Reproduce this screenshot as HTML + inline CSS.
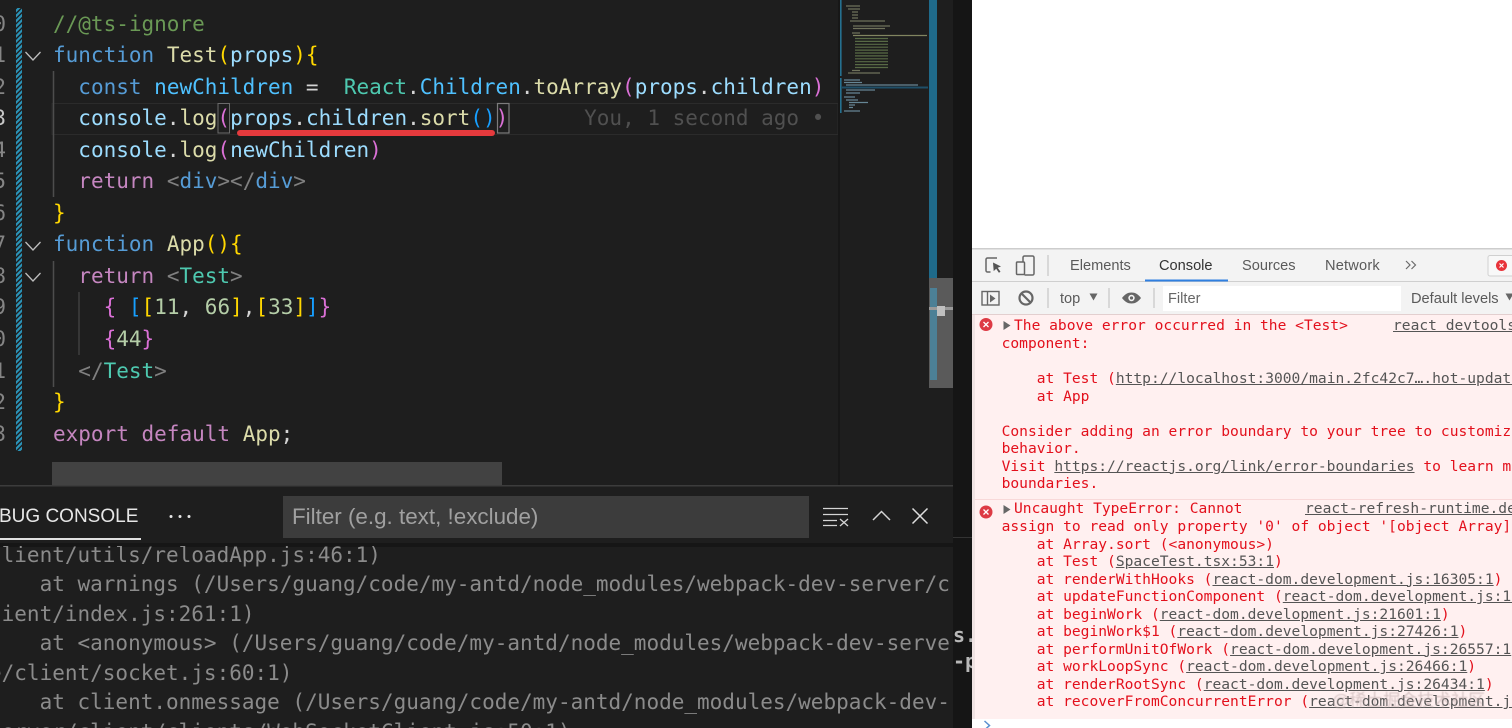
<!DOCTYPE html>
<html><head><meta charset="utf-8"><style>
html,body{margin:0;padding:0;background:#1e1e1e}
#root{position:relative;width:1512px;height:728px;overflow:hidden;background:#1e1e1e}
.a{position:absolute}
pre{margin:0;font-family:"DejaVu Sans Mono",monospace}
#code{left:53px;top:8.5px;font-size:21px;line-height:31.55px;color:#d4d4d4;filter:blur(.35px)}
.ln{left:-6.6px;top:8.5px;font-size:21px;line-height:31.55px;color:#858585;filter:blur(.35px)}
.k{color:#569cd6}.f{color:#dcdcaa}.p{color:#9cdcfe}.v{color:#4fc1ff}.t{color:#4ec9b0}.c{color:#c586c0}.g{color:#808080}.n{color:#b5cea8}.y{color:#ffd700}.o{color:#da70d6}.b{color:#179fff}.m{color:#6a9955}
#dbg{left:-11px;font-size:21px;line-height:29.5px;color:#8b8b8b;filter:blur(.35px)}
.ui{font-family:"Liberation Sans",sans-serif;white-space:nowrap}
#dev{left:972px;top:0;width:540px;height:728px;background:#fff;overflow:hidden}
.e{font-size:14.6px;line-height:17.55px;color:#e3101c;white-space:pre;filter:blur(.2px)}
.e u{color:#555;text-decoration-color:#555}
.tab{top:258px;font-size:14.6px;line-height:17px;color:#5a5a5a}
</style></head><body><div id="root">

<svg class="a" style="left:0;top:0" width="972" height="728" viewBox="0 0 972 728" fill="none">
<defs><pattern id="st" width="3.600" height="6" patternUnits="userSpaceOnUse" patternTransform="rotate(45)"><rect width="3.600" height="6" fill="#1e1e1e"/><rect width="2.200" height="6" fill="#2a93b8"/></pattern></defs>
<rect x="16" y="8" width="6" height="443" fill="url(#st)"/>
<rect x="52" y="103.500" width="786" height="31" stroke="#2b2b2b" stroke-width="1"/>
<path d="M25.500 52l7.500 8 7.500-8M25.500 242l7.500 8 7.500-8M25.500 273l7.500 8 7.500-8" stroke="#bdbdbd" stroke-width="1.300"/>
<path d="M53.500 71v126M53.500 261v126" stroke="#4d4d4d" stroke-width="1.500"/>
<path d="M79 292v63" stroke="#3f3f3f" stroke-width="1.500"/>
<rect x="218" y="103.500" width="11.500" height="29.500" stroke="#6a6a6a" stroke-width="1"/>
<rect x="497.500" y="103.500" width="11.500" height="29.500" stroke="#7c7c7c" stroke-width="1.200"/>
<rect x="838" y="0" width="115" height="485" fill="#1e1e1e"/>
<rect x="838" y="0" width="2" height="485" fill="#171717"/>
<rect x="840" y="0" width="1.600" height="76" fill="#25708f"/><rect x="840" y="78" width="1.600" height="35" fill="#25708f"/>
<g stroke-width="1.200" stroke="#6c8453" opacity=".75">
<path d="M846 6h14M848 9h12M852 12h6M852 15h6M852 18h6M850 21h35M853 26h37M853 28.500h32M852 33h8" stroke="#8a8f70"/>
<path d="M853 35.500h74" stroke="#a3a877"/>
<path d="M855 38.500h33M855 41.400h33M855 44.300h33M855 47.200h33M855 50.100h33M855 53h33M855 55.900h33M855 58.800h33M855 61.700h33M855 64.600h33M855 67.500h33"/>
<path d="M852 70.500h8M848 73h32" stroke="#8a8f70"/>
<path d="M844 80h16M844 82.500h18M846 85h72M846 90h29M846 93h14M844 97h11M846 100h12M849 102.500h19M849 105h6M849 107.500h4M844 111h16" stroke="#7fa9bd"/>
</g>
<rect x="842" y="86.500" width="86" height="2" fill="#1f4f68"/>
<rect x="929" y="0" width="8" height="278" fill="#1f6a8a"/>
<rect x="953" y="0" width="19" height="728" fill="#151515"/>
<rect x="929" y="278" width="24" height="110" fill="#5a5a5a"/>
<rect x="930" y="288" width="7" height="92" fill="#4c8096"/>
<rect x="929" y="307" width="24" height="3" fill="#9a9a9a"/>
<rect x="937" y="306" width="8" height="10" fill="#c0c0c0"/>
<rect x="52" y="462" width="450" height="23" fill="#424242"/>
<rect x="0" y="485" width="953" height="243" fill="#1e1e1e"/>
<rect x="0" y="485" width="953" height="1.500" fill="#3c3c3c"/>
<rect x="283" y="496" width="526" height="42" fill="#3c3c3c"/>
<rect x="0" y="538" width="141" height="2" fill="#e0e0e0"/>
<rect x="0" y="543" width="953" height="4" fill="#161616"/>
<rect x="953" y="537" width="19" height="1" fill="#333"/>
<circle cx="171" cy="516.500" r="1.500" fill="#e6e6e6"/><circle cx="180" cy="516.500" r="1.500" fill="#e6e6e6"/><circle cx="189" cy="516.500" r="1.500" fill="#e6e6e6"/>
<path d="M823 508.500h25M823 514.500h25M823 520.500h14M823 525.500h14M840 519l8 7M848 519l-8 7" stroke="#d4d4d4" stroke-width="1.300"/>
<path d="M873 520l8.500-8.500 8.500 8.500" stroke="#d4d4d4" stroke-width="1.500"/>
<path d="M912.500 508.500l15 15M927.500 508.500l-15 15" stroke="#dedede" stroke-width="1.500"/>
</svg>

<pre class="a ln">0
1
2
<span style="color:#c6c6c6">3</span>
4
5
6
7
8
9
0
1
2
3</pre>

<pre class="a" id="code"><span class="m">//@ts-ignore</span>
<span class="k">function</span> <span class="f">Test</span><span class="y">(</span><span class="p">props</span><span class="y">){</span>
  <span class="k">const</span> <span class="v">newChildren</span> =  <span class="t">React</span>.<span class="v">Children</span>.<span class="f">toArray</span><span class="o">(</span><span class="p">props</span>.<span class="p">children</span><span class="o">)</span>
  <span class="p">console</span>.<span class="f">log</span><span class="o">(</span><span class="p">props</span>.<span class="p">children</span>.<span class="f">sort</span><span class="b">()</span><span class="o">)</span>      <span style="color:#505050">You, 1 second ago •</span>
  <span class="p">console</span>.<span class="f">log</span><span class="o">(</span><span class="p">newChildren</span><span class="o">)</span>
  <span class="c">return</span> <span class="g">&lt;</span><span class="k">div</span><span class="g">&gt;&lt;/</span><span class="k">div</span><span class="g">&gt;</span>
<span class="y">}</span>
<span class="k">function</span> <span class="f">App</span><span class="y">(){</span>
  <span class="c">return</span> <span class="g">&lt;</span><span class="t">Test</span><span class="g">&gt;</span>
    <span class="o">{</span> <span class="b">[</span><span class="y">[</span><span class="n">11</span>, <span class="n">66</span><span class="y">]</span>,<span class="y">[</span><span class="n">33</span><span class="y">]</span><span class="b">]</span><span class="o">}</span>
    <span class="o">{</span><span class="n">44</span><span class="o">}</span>
  <span class="g">&lt;/</span><span class="t">Test</span><span class="g">&gt;</span>
<span class="y">}</span>
<span class="c">export</span> <span class="c">default</span> <span class="f">App</span>;</pre>

<div class="a" style="left:237px;top:130px;width:258px;height:6px;border-radius:3px;background:#e53a3d"></div>

<div class="a ui" style="left:-1px;top:504.500px;font-size:19px;line-height:24px;color:#e7e7e7">BUG CONSOLE</div>
<div class="a ui" style="left:292px;top:504px;font-size:22.400px;line-height:26px;color:#a0a0a0">Filter (e.g. text, !exclude)</div>

<div class="a" style="left:0;top:546px;width:953px;height:182px;overflow:hidden"><pre class="a" id="dbg" style="top:-5.500px">client/utils/reloadApp.js:46:1)
    at warnings (/Users/guang/code/my-antd/node_modules/webpack-dev-server/c
lient/index.js:261:1)
    at &lt;anonymous&gt; (/Users/guang/code/my-antd/node_modules/webpack-dev-serve
e/client/socket.js:60:1)
    at client.onmessage (/Users/guang/code/my-antd/node_modules/webpack-dev-
server/client/clients/WebSocketClient.js:50:1)</pre></div>

<pre class="a" style="left:953px;top:622px;width:19px;overflow:hidden;font-size:20px;line-height:26px;font-weight:bold;color:#b8b8b8">s.
-p</pre>

<div class="a" id="dev">
<svg class="a" style="left:0;top:0" width="540" height="728" viewBox="972 0 540 728" fill="none">
<rect x="972" y="248" width="540" height="67" fill="#f3f3f3"/>
<rect x="972" y="248" width="540" height="1.500" fill="#cdcdcd"/>
<rect x="972" y="281" width="540" height="1" fill="#cfcfcf"/>
<rect x="972" y="314" width="540" height="1" fill="#e2cfcf"/>
<rect x="972" y="315" width="540" height="404" fill="#fff0f0"/>
<rect x="972" y="499" width="540" height="1" fill="#f8d9d9"/>
<rect x="972" y="315" width="3" height="404" fill="#f0e3e3"/>
<rect x="1145" y="279.500" width="83" height="2" fill="#2f7fe0"/>
<path d="M997 258h-9.500a1.500 1.500 0 0 0-1.500 1.500v11a1.500 1.500 0 0 0 1.500 1.500h3" stroke="#666" stroke-width="1.500"/>
<path d="M993 262.500l8 4-3.300 1.200 2.800 4-1.600 1.100-2.700-4-2.500 2.300z" fill="#555"/>
<path d="M1023 267v-9.500a1.500 1.500 0 0 1 1.500-1.500h8a1.500 1.500 0 0 1 1.500 1.500v16a1.500 1.500 0 0 1-1.500 1.500h-8" stroke="#666" stroke-width="1.500"/>
<rect x="1016.500" y="262" width="8" height="12.500" rx="1" fill="#f3f3f3" stroke="#666" stroke-width="1.500"/>
<path d="M1048 255v21M1048 288v20M1109 288v20M1154 288v20" stroke="#cfcfcf" stroke-width="1.500"/>
<path d="M1406 261l4 4-4 4M1411.500 261l4 4-4 4" stroke="#6a6a6a" stroke-width="1.200"/>
<rect x="1488" y="255.500" width="30" height="20.500" rx="2" fill="#f8f8f8" stroke="#d0d0d0"/>
<circle cx="1501.500" cy="265.500" r="5.500" fill="#e8333a"/>
<path d="M1499.500 263.500l4 4M1503.500 263.500l-4 4" stroke="#fff" stroke-width="1.200"/>
<rect x="982" y="291.500" width="17" height="13.500" stroke="#666" stroke-width="1.400"/>
<path d="M987.500 291.500v13.500" stroke="#666" stroke-width="1.400"/><path d="M990 294.500l5.500 4-5.500 4z" fill="#666"/>
<circle cx="1026" cy="298" r="6.500" stroke="#666" stroke-width="2.200"/>
<path d="M1021.500 293.500l9 9" stroke="#666" stroke-width="2.200"/>
<path d="M1089.500 293.500h8l-4 7z" fill="#666"/>
<path d="M1122 298c3-4 6-5.500 9.500-5.500s6.500 1.500 9.500 5.500c-3 4-6 5.500-9.500 5.500s-6.500-1.500-9.500-5.500z" fill="#666"/>
<circle cx="1131.500" cy="298" r="3.200" fill="#f3f3f3"/><circle cx="1131.500" cy="298" r="1.600" fill="#666"/>
<rect x="1163" y="286" width="238" height="25" fill="#fff"/>
<path d="M1505.500 293.500h8l-4 7z" fill="#666"/>
<circle cx="986" cy="324.500" r="6.500" fill="#dd3a44"/>
<path d="M983.500 322l5 5M988.500 322l-5 5" stroke="#fff" stroke-width="1.300"/>
<path d="M1003.500 321l7 4.500-7 4.500z" fill="#666"/>
<circle cx="986" cy="512" r="6.500" fill="#dd3a44"/>
<path d="M983.500 509.500l5 5M988.500 509.500l-5 5" stroke="#fff" stroke-width="1.300"/>
<path d="M1003.500 505l7 4.500-7 4.500z" fill="#666"/>
<path d="M984.500 721l5 4.500-5 4.500" stroke="#5a8fd0" stroke-width="1.500"/>
</svg>

<div class="a ui tab" style="left:98px">Elements</div>
<div class="a ui tab" style="left:187px;color:#333">Console</div>
<div class="a ui tab" style="left:270px">Sources</div>
<div class="a ui tab" style="left:353px;letter-spacing:.2px">Network</div>
<div class="a ui" style="left:88px;top:291px;font-size:14.6px;line-height:17px;color:#5a5a5a">top</div>
<div class="a ui" style="left:196px;top:291px;font-size:14.6px;line-height:17px;color:#666">Filter</div>
<div class="a ui" style="left:439px;top:291px;font-size:14.6px;line-height:17px;color:#5a5a5a">Default levels</div>

<pre class="a e" style="left:42px;top:316.800px">The above error occurred in the &lt;Test&gt;</pre>
<pre class="a e" style="left:421px;top:316.800px"><u>react devtools_backend.js:4026</u></pre>
<pre class="a e" style="left:29.600px;top:335px">component:

    at Test (<u>http://localhost:3000/main.2fc42c7….hot-update.js:36:26</u>)
    at App

Consider adding an error boundary to your tree to customize this
behavior.
Visit <u>https://reactjs.org/link/error-boundaries</u> to learn more about error
boundaries.</pre>

<pre class="a e" style="left:42px;top:499.800px">Uncaught TypeError: Cannot</pre>
<pre class="a e" style="left:333px;top:499.800px"><u>react-refresh-runtime.development.js:1</u></pre>
<pre class="a e" style="left:29.600px;top:518px">assign to read only property '0' of object '[object Array]'
    at Array.sort (&lt;anonymous&gt;)
    at Test (<u>SpaceTest.tsx:53:1</u>)
    at renderWithHooks (<u>react-dom.development.js:16305:1</u>)
    at updateFunctionComponent (<u>react-dom.development.js:19588:1</u>)
    at beginWork (<u>react-dom.development.js:21601:1</u>)
    at beginWork$1 (<u>react-dom.development.js:27426:1</u>)
    at performUnitOfWork (<u>react-dom.development.js:26557:1</u>)
    at workLoopSync (<u>react-dom.development.js:26466:1</u>)
    at renderRootSync (<u>react-dom.development.js:26434:1</u>)
    at recoverFromConcurrentError (<u>react-dom.development.js:25850:1</u>)</pre>
<div class="a" style="left:360px;top:691px;font-family:'Liberation Sans','Noto Sans CJK SC',sans-serif;font-size:17px;line-height:20px;color:rgba(190,170,170,.6);white-space:nowrap;filter:blur(.5px)">@稀土掘金技术社区</div>
</div>

</div></body></html>
